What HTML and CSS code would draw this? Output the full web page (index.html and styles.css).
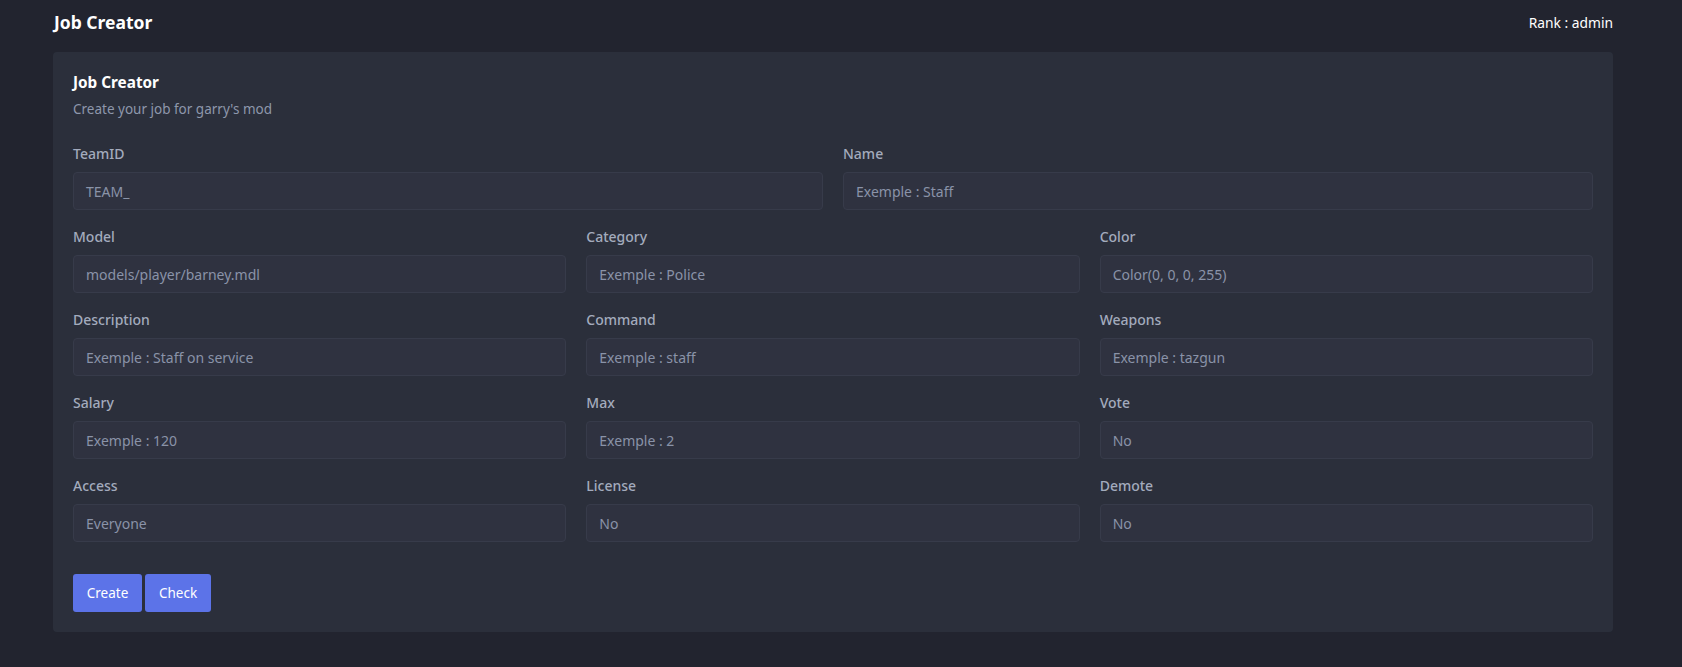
FILE: index.html
```html
<!DOCTYPE html>
<html>
<head>
<meta charset="utf-8">
<link rel="stylesheet" href="styles.css">
</head>
<body>
<header class="topbar">
  <div class="brand">Job Creator</div>
  <div class="rank">Rank : admin</div>
</header>
<main class="card">
  <h1 class="card-title">Job Creator</h1>
  <p class="card-sub">Create your job for garry's mod</p>
  <form class="form">
    <div class="row two">
      <div class="field"><label>TeamID</label><div class="input">TEAM_</div></div>
      <div class="field"><label>Name</label><div class="input">Exemple : Staff</div></div>
    </div>
    <div class="row three">
      <div class="field"><label>Model</label><div class="input">models/player/barney.mdl</div></div>
      <div class="field"><label>Category</label><div class="input">Exemple : Police</div></div>
      <div class="field"><label>Color</label><div class="input">Color(0, 0, 0, 255)</div></div>
    </div>
    <div class="row three">
      <div class="field"><label>Description</label><div class="input">Exemple : Staff on service</div></div>
      <div class="field"><label>Command</label><div class="input">Exemple : staff</div></div>
      <div class="field"><label>Weapons</label><div class="input">Exemple : tazgun</div></div>
    </div>
    <div class="row three">
      <div class="field"><label>Salary</label><div class="input">Exemple : 120</div></div>
      <div class="field"><label>Max</label><div class="input">Exemple : 2</div></div>
      <div class="field"><label>Vote</label><div class="input">No</div></div>
    </div>
    <div class="row three">
      <div class="field"><label>Access</label><div class="input">Everyone</div></div>
      <div class="field"><label>License</label><div class="input">No</div></div>
      <div class="field"><label>Demote</label><div class="input">No</div></div>
    </div>
    <div class="actions">
      <button type="button" class="btn btn-create">Create</button>
      <button type="button" class="btn btn-check">Check</button>
    </div>
  </form>
</main>
</body>
</html>
```
FILE: styles.css
```css
* { box-sizing: border-box; }
html, body { margin: 0; padding: 0; }
body {
  background: #22242f;
  font-family: "Noto Sans", "Open Sans", sans-serif;
  color: #e8ebf2;
  height: 667px;
  overflow: hidden;
}
.topbar {
  display: flex;
  justify-content: space-between;
  align-items: center;
  height: 44px;
  margin-left: 53px;
  width: 1560px;
  padding-left: 1px;
}
.brand {
  font-size: 17.5px;
  font-weight: 700;
  color: #ffffff;
}
.rank {
  font-size: 13.8px;
  color: #ffffff;
}
.card {
  margin: 8px 0 0 53px;
  width: 1560px;
  background: #2b2f3b;
  border-radius: 4px;
  padding: 20px 20px 20px 20px;
}
.card-title {
  margin: 0;
  font-size: 15.3px;
  font-weight: 700;
  line-height: 20px;
  color: #ffffff;
}
.card-sub {
  margin: 7px 0 0;
  font-size: 13.5px;
  line-height: 20px;
  color: #8e97ab;
}
.form { margin-top: 25px; }
.row {
  display: grid;
  column-gap: 20px;
  margin-bottom: 17px;
}
.row.two { grid-template-columns: 1fr 1fr; }
.row.three { grid-template-columns: 1fr 1fr 1fr; }
.field label {
  display: block;
  font-size: 14px;
  font-weight: 500;
  line-height: 20px;
  color: #a3abbd;
  margin-bottom: 8px;
}
.input {
  height: 38px;
  background: #2f3240;
  border: 1px solid #373b4a;
  border-radius: 4px;
  padding: 0 12px;
  display: flex;
  align-items: center;
  font-size: 14px;
  color: #8a93a8;
}
.actions {
  margin-top: 32px;
  display: flex;
  gap: 3px;
}
.btn {
  height: 38px;
  border: none;
  border-radius: 3px;
  background: #5c73e8;
  color: #ffffff;
  font-family: inherit;
  font-size: 13.5px;
  padding: 0;
}
.btn-create { width: 69px; }
.btn-check { width: 66px; }
```
